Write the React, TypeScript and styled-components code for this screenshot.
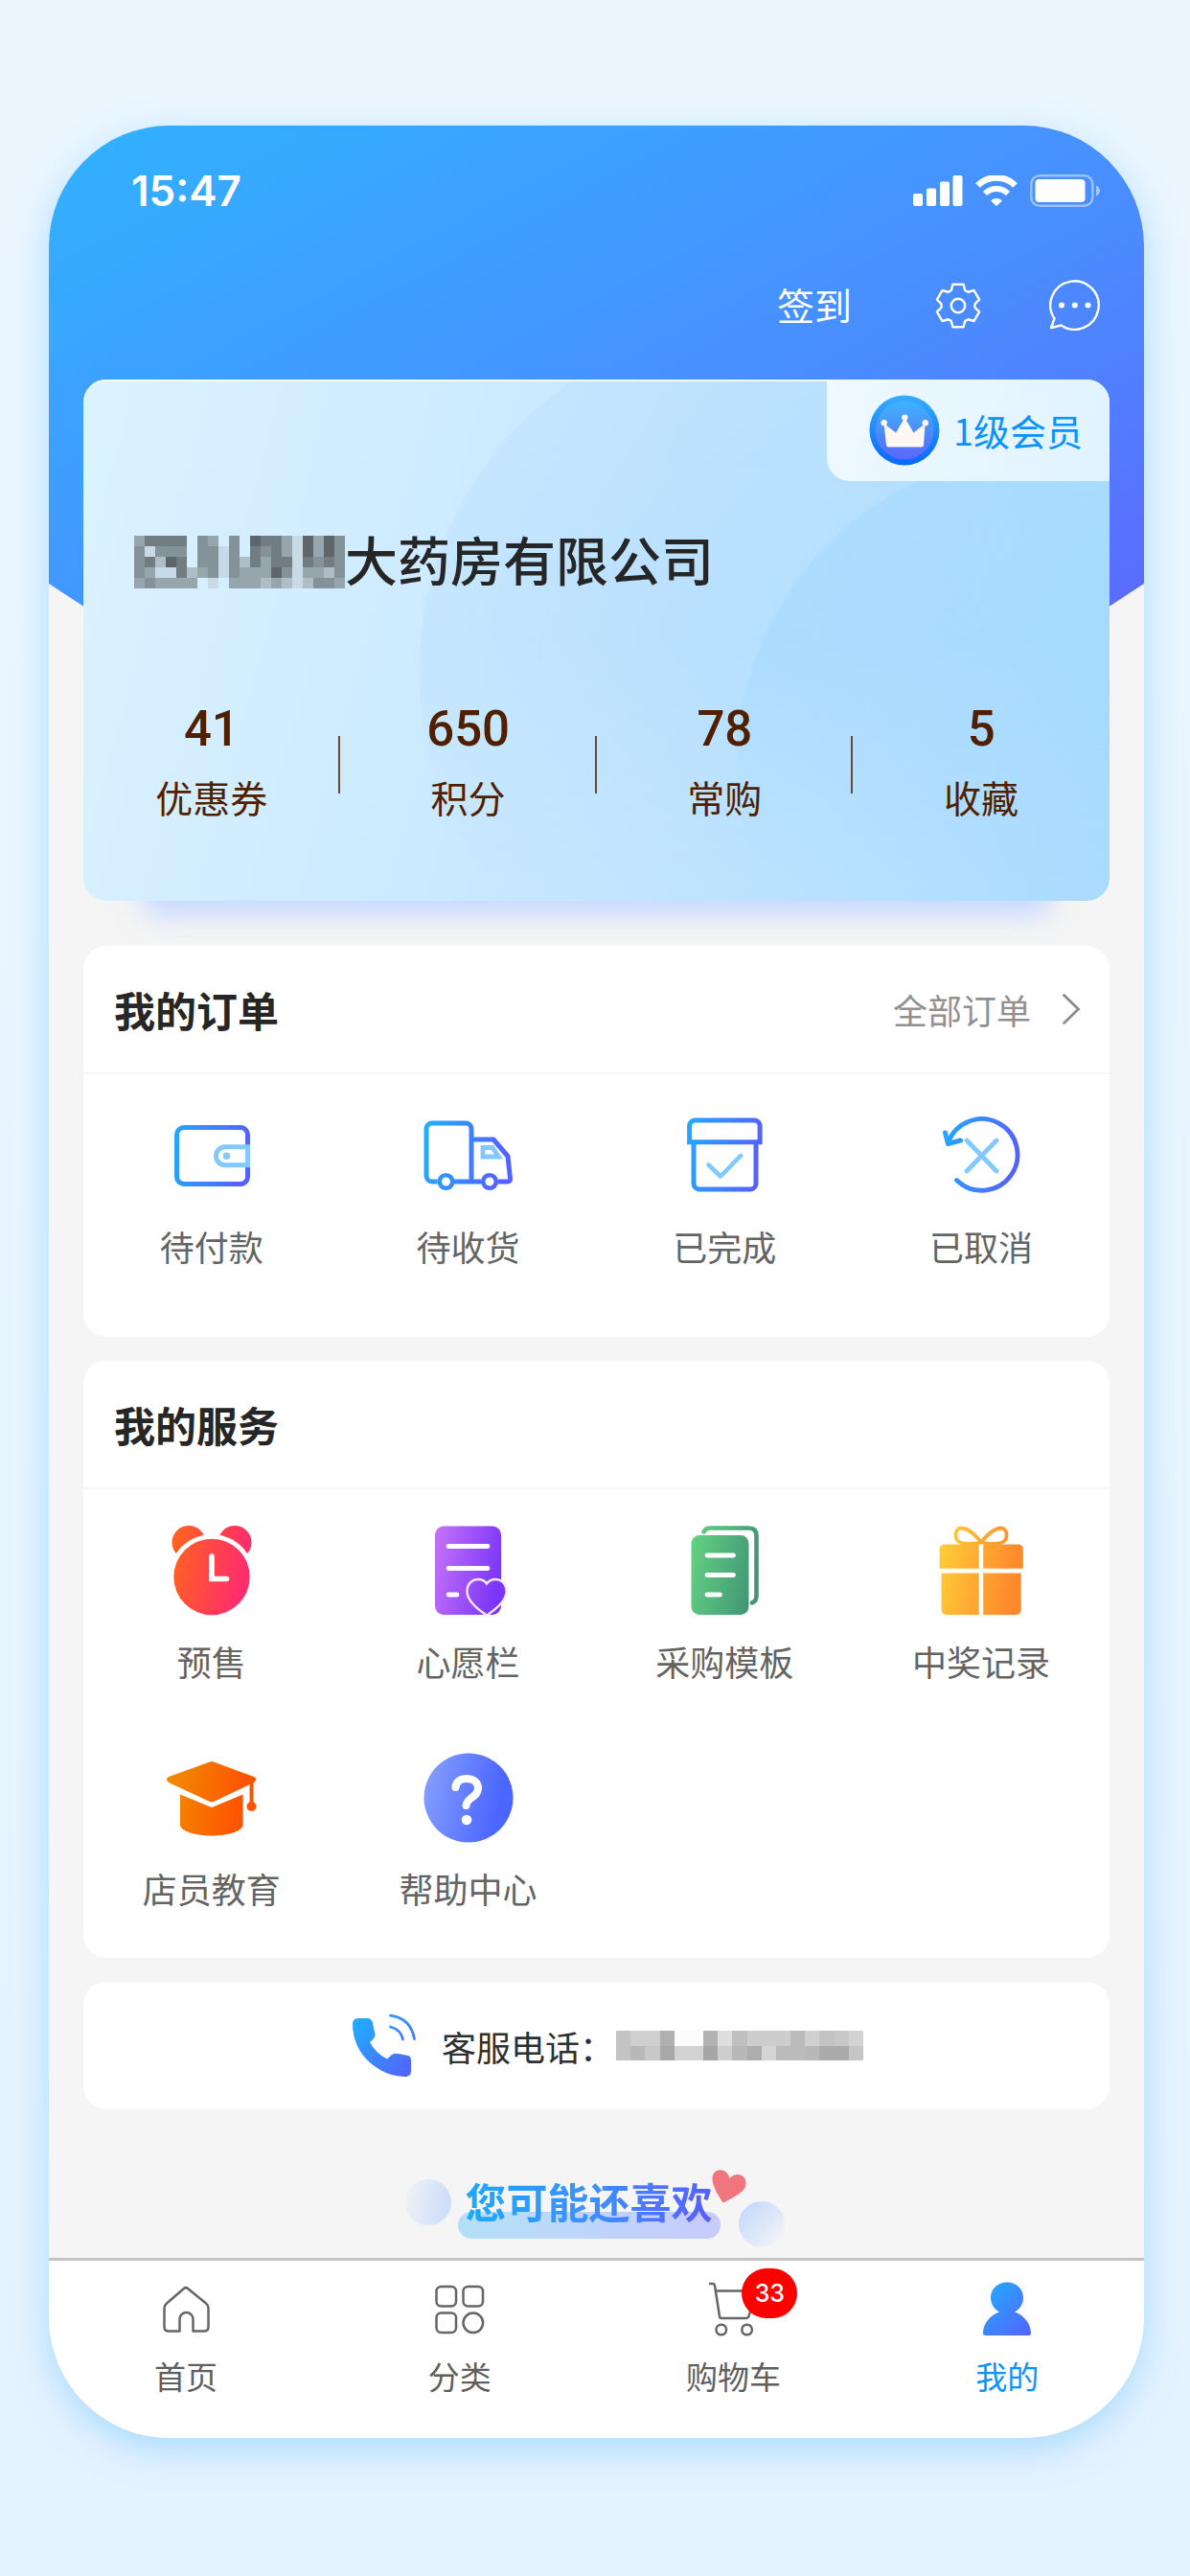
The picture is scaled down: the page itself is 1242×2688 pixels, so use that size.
import React, { useId } from "react";
import styled, { createGlobalStyle } from "styled-components";

const GlobalStyle = createGlobalStyle`
  * { box-sizing: border-box; }
  body {
    margin: 0;
    background: #e7f4ff;
    font-family: "Noto Sans CJK SC", "Noto Sans", sans-serif;
    color: #262626;
    -webkit-font-smoothing: antialiased;
  }
  h1, h2, p, ul { margin: 0; padding: 0; font-weight: inherit; }
  ul { list-style: none; }
  button {
    border: 0;
    padding: 0;
    background: none;
    font: inherit;
    color: inherit;
    cursor: pointer;
  }
  a { color: inherit; text-decoration: none; }
  svg { display: block; flex: none; }
`;

const Page = styled.div`
  min-height: 100vh;
  padding: 131px 48px 144px 51px;
  background: linear-gradient(180deg, #ebf6ff 0%, #e6f4ff 70%, #e5f2ff 100%);
`;

const Phone = styled.main`
  overflow: hidden;
  border-radius: 126px;
  background: #f5f5f5;
  box-shadow: 0 12px 36px rgba(120, 200, 255, 0.55);
`;

const Hero = styled.header`
  padding-bottom: 280px;
  color: #fff;
  background: linear-gradient(152deg, #30b2ff 0%, #419aff 40%, #4b8aff 64%, #5c69ff 100%);
  clip-path: polygon(
    0 0,
    100% 0,
    100% 478px,
    calc(100% - 64px) 520px,
    64px 520px,
    0 478px
  );
`;

const StatusBar = styled.div`
  display: flex;
  align-items: center;
  justify-content: space-between;
  height: 136px;
  padding: 0 45px 0 86px;
`;

const Clock = styled.time`
  font-family: Inter, "Noto Sans", sans-serif;
  font-size: 44px;
  font-weight: 600;
  line-height: 48px;
`;

const StatusIcons = styled.div`
  display: flex;
  align-items: center;
  gap: 13px;
`;

const Actions = styled.div`
  display: flex;
  align-items: center;
  justify-content: flex-end;
  gap: 71px;
  height: 104px;
  padding-right: 45px;
`;

const SignIn = styled.button`
  margin-right: 16px;
  padding-bottom: 4px;
  font-size: 39px;
  line-height: 48px;
`;

const Content = styled.div`
  display: flex;
  flex-direction: column;
  gap: 25px;
  padding: 0 36px;
`;

const CardLayer = styled.div`
  position: relative;
  z-index: 0;
  margin: -255px 0 22px;

  &::before {
    content: "";
    position: absolute;
    z-index: -1;
    right: 60px;
    bottom: -16px;
    left: 60px;
    height: 60px;
    border-radius: 20px;
    background: #c7d8ff;
    filter: blur(14px);
  }
`;

const MemberCard = styled.section`
  position: relative;
  isolation: isolate;
  display: flex;
  flex-direction: column;
  padding-bottom: 85px;
  border-radius: 24px;
  box-shadow: inset 0 2px 0 rgba(255, 255, 255, 0.8);
  background: linear-gradient(105deg, #dcf2ff 0%, #cdebff 35%, #b9e1ff 75%, #a9dbff 100%);

  &::before {
    content: "";
    position: absolute;
    z-index: -1;
    inset: 2px 0 0;
    border-radius: inherit;
    background:
      radial-gradient(circle 330px at 1011px 402px, rgba(158, 216, 255, 0.5) 0, rgba(158, 216, 255, 0.42) 329px, transparent 330px),
      radial-gradient(circle 367px at 717px 302px, rgba(172, 216, 255, 0.4) 0, rgba(172, 216, 255, 0.22) 366px, transparent 367px);
    mask-image: linear-gradient(180deg, #000 50%, transparent 96%);
  }
`;

const Level = styled.div`
  display: flex;
  align-items: center;
  align-self: flex-end;
  gap: 14px;
  height: 106px;
  padding: 0 28px 0 44px;
  border-radius: 0 24px 0 24px;
  background: linear-gradient(100deg, #eff9ff 0%, #e0f3ff 100%);
  color: #0a93ff;
  font-size: 38px;
  line-height: 48px;
`;

const Company = styled.h1`
  display: flex;
  align-items: flex-start;
  height: 60px;
  margin: 52px 0 117px 53px;
  font-size: 55px;
  font-weight: 500;
  line-height: 56px;

  svg { align-self: flex-end; }
`;

const Stats = styled.ul`
  display: grid;
  grid-template-columns: repeat(4, 1fr);
  color: #4f1f00;
`;

const Stat = styled.li<{ $divided: boolean }>`
  display: flex;
  flex-direction: column;
  align-items: center;
  gap: 16px;
  background: ${(p) =>
    p.$divided
      ? "linear-gradient(#6a4a33, #6a4a33) right 37px / 2px 60px no-repeat"
      : "none"};
`;

const StatValue = styled.strong`
  font-family: Roboto, "Noto Sans", sans-serif;
  font-size: 51px;
  font-weight: 500;
  line-height: 60px;
`;

const StatLabel = styled.span`
  font-size: 39px;
  line-height: 48px;
`;

const Card = styled.section`
  border-radius: 24px;
  background: #fff;
`;

const CardHeader = styled.div`
  display: flex;
  align-items: center;
  justify-content: space-between;
  height: 134px;
  padding: 0 30px 0 32px;
  border-bottom: 2px solid #f6f6f6;
`;

const CardTitle = styled.h2`
  font-size: 43px;
  font-weight: 700;
  line-height: 56px;
`;

const AllOrders = styled.a`
  display: flex;
  align-items: center;
  gap: 32px;
  color: #919191;
  font-size: 36px;
  line-height: 48px;
`;

const IconGrid = styled.ul<{ $bottom: number }>`
  display: grid;
  grid-template-columns: repeat(4, 1fr);
  row-gap: 71px;
  padding: 37px 0 ${(p) => p.$bottom}px;
`;

const GridItem = styled.li`
  display: flex;
  justify-content: center;
`;

const GridButton = styled.button`
  display: flex;
  flex-direction: column;
  align-items: center;
  gap: 22px;
  color: #646464;
  font-size: 36px;
  line-height: 48px;
`;

const ServicePhone = styled(Card)`
  display: flex;
  align-items: center;
  justify-content: center;
  gap: 26px;
  height: 133px;
  padding-left: 24px;
  color: #303030;
  font-size: 36px;
  line-height: 48px;
`;

const PhoneLine = styled.p`
  display: flex;
  align-items: center;
  gap: 2px;
`;

const Recommend = styled.div`
  display: flex;
  align-items: flex-start;
  justify-content: center;
  padding: 67px 0 11px;
`;

const Bubble = styled.span<{ $side: "left" | "right" }>`
  width: 48px;
  height: 48px;
  border-radius: 50%;
  margin: ${(p) => (p.$side === "left" ? "6px 7px 0 0" : "29px 4px 0 19px")};
  background: ${(p) =>
    p.$side === "left"
      ? "linear-gradient(100deg, rgba(205, 220, 248, 0.1) 0%, #c9dafb 100%)"
      : "linear-gradient(135deg, #c4d9fb 10%, rgba(220, 232, 250, 0.1) 90%)"};
`;

const RecommendLabel = styled.div`
  position: relative;
  padding: 0 8px 12px;
`;

const RecommendPill = styled.div`
  position: absolute;
  right: 0;
  bottom: 0;
  left: 0;
  height: 28px;
  border-radius: 14px;
  background: linear-gradient(100deg, #b4e0f8, #c8cafc);
`;

const RecommendText = styled.h2`
  position: relative;
  font-size: 43px;
  font-weight: 700;
  line-height: 56px;
  color: transparent;
  background: linear-gradient(100deg, #1ba9ff 0%, #3d90ff 50%, #5a5cff 100%);
  -webkit-background-clip: text;
  background-clip: text;
`;

const HeartMark = styled.svg`
  position: absolute;
  top: -6px;
  right: -28px;
`;

const TabBar = styled.nav`
  display: grid;
  grid-template-columns: repeat(4, 1fr);
  padding: 21px 0 43px;
  border-top: 3px solid #c4c4c4;
  background: #fff;
`;

const Tab = styled.a<{ $active?: boolean }>`
  display: flex;
  flex-direction: column;
  align-items: center;
  gap: 17px;
  color: ${(p) => (p.$active ? "#0a93ff" : "#5f5f5f")};
  font-size: 33px;
  line-height: 44px;
`;

const TabIcon = styled.span`
  position: relative;
`;

const Badge = styled.span`
  position: absolute;
  top: -13px;
  left: 39px;
  min-width: 58px;
  height: 52px;
  border-radius: 26px;
  background: #ff0000;
  color: #fff;
  font-family: Inter, "Noto Sans", sans-serif;
  font-size: 25px;
  font-weight: 500;
  line-height: 52px;
  text-align: center;
`;

type Stops = [string, string];

function Gradient({ id, stops, diagonal, size = 96 }: { id: string; stops: Stops; diagonal?: boolean; size?: number }) {
  return (
    <defs>
      <linearGradient id={id} gradientUnits="userSpaceOnUse" x1="0" y1="0" x2={size} y2={diagonal ? size : size / 5}>
        <stop offset="0.08" stopColor={stops[0]} />
        <stop offset="0.92" stopColor={stops[1]} />
      </linearGradient>
    </defs>
  );
}

const BLUE: Stops = ["#20adff", "#5463ff"];
const LIGHT_BLUE = "#82c9ff";

function Icon({ stops, children }: { stops: Stops; children: (paint: string) => React.ReactNode }) {
  const id = useId();
  return (
    <svg width="96" height="96" viewBox="0 0 96 96" fill="none" aria-hidden="true">
      <Gradient id={id} stops={stops} />
      {children(`url(#${id})`)}
    </svg>
  );
}

const WalletIcon = () => (
  <Icon stops={BLUE}>
    {(paint) => (
      <>
        <path d="M85.5 38V26a7.5 7.5 0 0 0-7.5-7.5H19a7.5 7.5 0 0 0-7.5 7.5v44a7.5 7.5 0 0 0 7.5 7.5h59a7.5 7.5 0 0 0 7.5-7.5V60" stroke={paint} strokeWidth="5" />
        <path d="M85.5 38.8H62a9.5 9.5 0 0 0 0 19h23.5Z" stroke={LIGHT_BLUE} strokeWidth="5" />
        <circle cx="63.4" cy="48.2" r="3.7" fill={LIGHT_BLUE} />
      </>
    )}
  </Icon>
);

const TruckIcon = () => (
  <Icon stops={BLUE}>
    {(paint) => (
      <>
        <path
          d="M15.5 75H10a6 6 0 0 1-6-6V20a6 6 0 0 1 6-6h35a6 6 0 0 1 6 6v55M33 75h28.5M51 31h23l15 17.500L91.500 72q.3 3-3 3H79"
          stroke={paint}
          strokeWidth="5"
          strokeLinejoin="round"
        />
        <circle cx="24.5" cy="75" r="6.8" stroke={paint} strokeWidth="4.6" fill="#fff" />
        <circle cx="70" cy="75" r="6.8" stroke={paint} strokeWidth="4.6" fill="#fff" />
        <path d="M63 39.500h10l6.500 9.500H63Z" stroke={LIGHT_BLUE} strokeWidth="4.8" />
      </>
    )}
  </Icon>
);

const DoneIcon = () => (
  <Icon stops={BLUE}>
    {(paint) => (
      <>
        <path d="M11.600 33.800V17a6 6 0 0 1 6-6h61.500a6 6 0 0 1 6 6v16.800ZM16 34v43a6 6 0 0 0 6 6h53a6 6 0 0 0 6-6V34" stroke={paint} strokeWidth="5" />
        <path d="m31.500 57.500 12.500 12 21-21.500" stroke={LIGHT_BLUE} strokeWidth="4.6" strokeLinecap="round" strokeLinejoin="round" />
      </>
    )}
  </Icon>
);

const CancelIcon = () => (
  <Icon stops={BLUE}>
    {(paint) => (
      <>
        <path d="M22.500 73.500A37.300 37.300 0 1 0 13.500 34.500" stroke={paint} strokeWidth="4.8" strokeLinecap="round" />
        <path d="m10.500 24 3 11.500L26.500 32" stroke={paint} strokeWidth="5" strokeLinecap="round" strokeLinejoin="round" />
        <path d="m33 32 31 32M64 32 33 64" stroke={LIGHT_BLUE} strokeWidth="4.8" strokeLinecap="round" />
      </>
    )}
  </Icon>
);

const AlarmIcon = () => (
  <Icon stops={["#ff641e", "#ff2d6c"]}>
    {(paint) => (
      <>
        <circle cx="24" cy="18.500" r="17.500" fill={paint} />
        <circle cx="72" cy="18.500" r="17.500" fill={paint} />
        <circle cx="48" cy="54.500" r="44.500" fill="#fff" />
        <circle cx="48" cy="54.500" r="39.700" fill={paint} />
        <path d="M48 33v23.500h15.500" stroke="#fff" strokeWidth="5.600" strokeLinecap="round" />
      </>
    )}
  </Icon>
);

const WishIcon = () => (
  <Icon stops={["#cc77f8", "#7a36f8"]}>
    {(paint) => (
      <>
        <rect x="13" y="1.500" width="69" height="92.500" rx="9" fill={paint} />
        <path d="M27 22.500h41M27 45.500h41M27 73h9" stroke="#fff" strokeWidth="4.800" strokeLinecap="round" />
        <path
          d="M67 94.500C57 88 46.500 79 46.500 69.500c0-7.500 5-12.500 11.500-12.500 3.800 0 7 1.700 9 4.500 2-2.800 5.200-4.500 9-4.500 6.500 0 11.500 5 11.500 12.500C87.500 79 77 88 67 94.500Z"
          fill={paint}
          stroke="#f3e6ff"
          strokeWidth="2.400"
        />
      </>
    )}
  </Icon>
);

const TemplateIcon = () => (
  <Icon stops={["#67d884", "#419675"]}>
    {(paint) => (
      <>
        <path d="M26.500 7.500Q28.500 3.500 33 3.500h40.500q8 0 8 8V74q0 6-4.500 7.500" stroke={paint} strokeWidth="4.600" strokeLinecap="round" />
        <rect x="13.500" y="11" width="60" height="83" rx="8.500" fill={paint} />
        <path d="M30 32h27.500M30 52.500h27.500M30 73h13.500" stroke="#fff" strokeWidth="4.800" strokeLinecap="round" />
      </>
    )}
  </Icon>
);

const GiftIcon = () => (
  <Icon stops={["#ffcf38", "#ff8a2c"]}>
    {(paint) => (
      <>
        <path d="M48 18.500C41 9.500 33 3.500 27 3.500c-6.500 0-8.500 13 .5 15.500 6 1.500 13 1 20.500-.5 7.500 1.500 14.500 2 20.500.5 9-2.500 7-15.500.5-15.500-6 0-14 6-21 15Z" stroke={paint} strokeWidth="3.800" strokeLinejoin="round" />
        <path d="M10 20.500h35.700v25.200H4.600V26q0-5.500 5.400-5.500ZM50.200 20.500h36q5.600 0 5.600 5.500v19.700H50.200ZM6.500 50.500h39.200V94H12.500q-6 0-6-6ZM50.200 50.500h39.500V88q0 6-6 6H50.200Z" fill={paint} />
      </>
    )}
  </Icon>
);

const EducationIcon = () => (
  <Icon stops={["#f08c00", "#ff5200"]}>
    {(paint) => (
      <>
        <path d="M46 10.500q2-.8 4 0L92 26q4.500 2.500 0 6L50 52q-2 .8-4 0L3 32q-4-3.500 0-6Z" fill={paint} />
        <path d="M15 44.500 48 58l32.500-13.500V76C80.500 83 64 87.500 48 87.500S15 83 15 76Z" fill={paint} />
        <path d="M89.500 32v24" stroke={paint} strokeWidth="4" />
        <circle cx="89.500" cy="57" r="5" fill={paint} />
      </>
    )}
  </Icon>
);

const HelpIcon = () => (
  <Icon stops={["#849dff", "#4a66ff"]}>
    {(paint) => (
      <>
        <circle cx="48" cy="48" r="46.500" fill={paint} />
        <path d="M34.500 37C35 31 39.500 28 46 28c6.800 0 12 3.800 12 10C58 47.500 45.500 48 45.500 56" stroke="#fff" strokeWidth="8" strokeLinecap="round" />
        <circle cx="46" cy="71" r="5.300" fill="#fff" />
      </>
    )}
  </Icon>
);

const gearPath = (() => {
  const points: string[] = [];
  const at = (deg: number, r: number) => {
    const a = (deg * Math.PI) / 180;
    points.push(`${(24 + r * Math.sin(a)).toFixed(2)} ${(24 - r * Math.cos(a)).toFixed(2)}`);
  };
  for (let i = 0; i < 6; i++) {
    const mid = i * 60;
    at(mid - 24, 17.6);
    at(mid - 14, 23);
    at(mid + 14, 23);
    at(mid + 24, 17.6);
  }
  return `M${points.join("L")}Z`;
})();

const GearIcon = () => (
  <svg width="48" height="48" viewBox="0 0 48 48" fill="none" stroke="#fff" strokeWidth="2.4" strokeLinejoin="round" aria-hidden="true">
    <path d={gearPath} />
    <circle cx="24" cy="24" r="7.200" />
  </svg>
);

const ChatIcon = () => (
  <svg width="54" height="54" viewBox="0 0 54 54" fill="none" aria-hidden="true">
    <path d="M5.500 40.500A25.200 25.200 0 1 1 12.500 47.500L2 50Z" stroke="#fff" strokeWidth="2.400" strokeLinejoin="round" />
    <circle cx="13" cy="26.500" r="3" fill="#fff" />
    <circle cx="26.800" cy="26.500" r="3" fill="#fff" />
    <circle cx="40.500" cy="26.500" r="3" fill="#fff" />
  </svg>
);

const SignalIcon = () => (
  <svg width="52" height="32" viewBox="0 0 52 32" fill="#fff" aria-hidden="true">
    <rect x="0" y="19" width="10" height="13" rx="2" />
    <rect x="14" y="13.500" width="10" height="18.500" rx="2" />
    <rect x="28" y="6.500" width="10" height="25.500" rx="2" />
    <rect x="41.500" y="0" width="10" height="32" rx="2" />
  </svg>
);

const WifiIcon = () => (
  <svg width="44" height="32" viewBox="0 0 44 32" fill="none" stroke="#fff" aria-hidden="true">
    <path d="M2.500 10.500A27.500 27.500 0 0 1 41.500 10.500" strokeWidth="6.500" />
    <path d="M10 19a17 17 0 0 1 24 0" strokeWidth="6" />
    <path d="M16 26.500a8.500 8.500 0 0 1 12 0L22 32Z" fill="#fff" stroke="none" />
  </svg>
);

const BatteryIcon = () => (
  <svg width="74" height="34" viewBox="0 0 74 34" fill="none" aria-hidden="true">
    <rect x="1.300" y="1.300" width="64" height="31.400" rx="8.500" stroke="#fff" strokeOpacity="0.45" strokeWidth="2.400" />
    <rect x="5.500" y="5" width="52" height="24" rx="4" fill="#fff" />
    <path d="M69 11.500c2.500 1 4 3 4 5.500s-1.500 4.500-4 5.500Z" fill="#fff" fillOpacity="0.5" />
  </svg>
);

const CrownIcon = () => (
  <svg width="74" height="74" viewBox="0 0 74 74" aria-hidden="true">
    <defs>
      <linearGradient id="crown-ring" x1="0" y1="0" x2="0" y2="1">
        <stop offset="0" stopColor="#35adff" />
        <stop offset="1" stopColor="#0568ff" />
      </linearGradient>
      <linearGradient id="crown-disc" x1="0" y1="0" x2="0" y2="1">
        <stop offset="0" stopColor="#3fb4ff" />
        <stop offset="1" stopColor="#5a66fb" />
      </linearGradient>
    </defs>
    <circle cx="37" cy="37" r="36.500" fill="url(#crown-ring)" />
    <circle cx="37" cy="37" r="30.500" fill="url(#crown-disc)" />
    <g fill="#fff8f2">
      <path d="m15.500 30 12.500 9.500L37.300 24l9.200 15.500L58.500 30 57 52.500q-.2 2-2.200 2H20.200q-2 0-2.200-2Z" />
      <circle cx="15.700" cy="29.300" r="3.200" />
      <circle cx="37.300" cy="23.600" r="3.200" />
      <circle cx="58.700" cy="29.300" r="3.200" />
    </g>
  </svg>
);

const CallIcon = () => {
  const id = useId();
  return (
    <svg width="67" height="67" viewBox="0 0 67 67" fill="none" aria-hidden="true">
      <Gradient id={id} stops={BLUE} diagonal size={66} />
      <path
        d="M0 11Q0 5 6 5h9q5 0 6 5l2.500 12q.5 3-5.500 8Q24 41.500 36 47.500l5-4.500q3-2 6-1l10 1.800q4 .7 4 4.700V60q0 6-7 6C28 65 0 44 0 11Z"
        fill={`url(#${id})`}
      />
      <path d="M39.500 14Q50.500 17 52.500 27M39.500 2.200Q60.500 5 64.500 26.500" stroke={`url(#${id})`} strokeWidth="2.800" strokeLinecap="round" />
    </svg>
  );
};

const ChevronIcon = () => (
  <svg width="20" height="34" viewBox="0 0 20 34" fill="none" stroke="#8c8c8c" strokeWidth="2.800" strokeLinecap="round" aria-hidden="true">
    <path d="m2.500 2.500 15 14.500-15 14.500" />
  </svg>
);

const tabSvg = { width: 60, height: 60, viewBox: "0 0 60 60", fill: "none", stroke: "#666", strokeWidth: 2.5, "aria-hidden": true } as const;

const HomeIcon = () => (
  <svg {...tabSvg} strokeLinejoin="round">
    <path d="M28 8q2-1.700 4 0l19 15.500q2.500 2 2.500 5V48q0 4.500-4.500 4.500H37.500V40a7 7 0 0 0-14 0v12.500H12q-4.500 0-4.500-4.500V28.500q0-3 2.500-5Z" />
  </svg>
);

const CategoryIcon = () => (
  <svg {...tabSvg}>
    <rect x="5.500" y="6" width="20.500" height="20.500" rx="5" />
    <rect x="33.500" y="6" width="20.500" height="20.500" rx="5" />
    <rect x="5.500" y="33.500" width="20.500" height="20.500" rx="5" />
    <circle cx="43.800" cy="43.800" r="10.300" />
  </svg>
);

const CartIcon = () => (
  <svg {...tabSvg} strokeLinejoin="round">
    <path d="M5 3h4q1.500 0 2 2l5 32q.3 2 2 2h25.500q2.500 0 3.200-2.500L54 10.500H12" />
    <circle cx="17.800" cy="51" r="5.300" />
    <circle cx="44.600" cy="51" r="5.300" />
  </svg>
);

const UserIcon = () => {
  const id = useId();
  return (
    <svg width="60" height="60" viewBox="0 0 60 60" aria-hidden="true">
      <Gradient id={id} stops={BLUE} diagonal size={60} />
      <path
        d="M30 1.500c10 0 17 7 17 16 0 6.500-3.500 12-9 15C48 36 55 45 55 54.500q0 2.500-2 2.500H7.500q-2.500 0-2.500-2.500C5 45 12 36 22 32.500c-5.500-3-9-8.500-9-15 0-9 7-16 17-16Z"
        fill={`url(#${id})`}
      />
    </svg>
  );
};

/* Privacy mosaics: one character per cell, keyed to a shade. */
const SHADES: Record<string, string> = {
  "1": "#c8dae6",
  "2": "#aebdc6",
  "3": "#97a5ad",
  "4": "#84929a",
  "5": "#727d83",
  "6": "#5e666b",
};

const NAME_CELLS = [
  "35555.43.4.655316364",
  "41444.4414.545316364",
  "45265.44142535515454",
  "43115234143336413324",
  "343333.1.33323212443",
];

const NUMBER_CELLS = [
  ["c4", "cf", "cf", "b0", "fb", "fb", "b2", "de", "bf", "cd", "cd", "cd", "bb", "d0", "c3", "c8", "d3"],
  ["c3", "b8", "c8", "a8", "d3", "d3", "a6", "ce", "b8", "ad", "d5", "bb", "bb", "b8", "ab", "ab", "c6"],
];

const NameMosaic = () => (
  <svg width="220" height="55" viewBox="0 0 20 5" preserveAspectRatio="none" shapeRendering="crispEdges" aria-hidden="true">
    {NAME_CELLS.map((row, y) =>
      [...row].map((cell, x) => (SHADES[cell] ? <rect key={`${x}-${y}`} x={x} y={y} width="1" height="1" fill={SHADES[cell]} /> : null))
    )}
  </svg>
);

const NumberMosaic = () => (
  <svg width="258" height="31" viewBox="0 0 17 2" preserveAspectRatio="none" shapeRendering="crispEdges" aria-hidden="true">
    {NUMBER_CELLS.map((row, y) => row.map((c, x) => <rect key={`${x}-${y}`} x={x} y={y} width="1" height="1" fill={`#${c}${c}${c}`} />))}
  </svg>
);

const stats = [
  { value: "41", label: "优惠券" },
  { value: "650", label: "积分" },
  { value: "78", label: "常购" },
  { value: "5", label: "收藏" },
];

const orders = [
  { label: "待付款", Glyph: WalletIcon },
  { label: "待收货", Glyph: TruckIcon },
  { label: "已完成", Glyph: DoneIcon },
  { label: "已取消", Glyph: CancelIcon },
];

const services = [
  { label: "预售", Glyph: AlarmIcon },
  { label: "心愿栏", Glyph: WishIcon },
  { label: "采购模板", Glyph: TemplateIcon },
  { label: "中奖记录", Glyph: GiftIcon },
  { label: "店员教育", Glyph: EducationIcon },
  { label: "帮助中心", Glyph: HelpIcon },
];

const tabs = [
  { label: "首页", Glyph: HomeIcon },
  { label: "分类", Glyph: CategoryIcon },
  { label: "购物车", Glyph: CartIcon, badge: 33 },
  { label: "我的", Glyph: UserIcon, active: true },
];

function Shortcuts({ items, bottom }: { items: typeof orders; bottom: number }) {
  return (
    <IconGrid $bottom={bottom}>
      {items.map(({ label, Glyph }) => (
        <GridItem key={label}>
          <GridButton type="button">
            <Glyph />
            {label}
          </GridButton>
        </GridItem>
      ))}
    </IconGrid>
  );
}

export default function App() {
  return (
    <>
      <GlobalStyle />
      <Page>
        <Phone>
          <Hero>
            <StatusBar>
              <Clock>15:47</Clock>
              <StatusIcons>
                <SignalIcon />
                <WifiIcon />
                <BatteryIcon />
              </StatusIcons>
            </StatusBar>
            <Actions>
              <SignIn type="button">签到</SignIn>
              <button type="button" aria-label="设置">
                <GearIcon />
              </button>
              <button type="button" aria-label="消息">
                <ChatIcon />
              </button>
            </Actions>
          </Hero>

          <Content>
            <CardLayer>
              <MemberCard>
                <Level>
                  <CrownIcon />
                  1级会员
                </Level>
                <Company>
                  <NameMosaic />
                  大药房有限公司
                </Company>
                <Stats>
                  {stats.map((s, i) => (
                    <Stat key={s.label} $divided={i < stats.length - 1}>
                      <StatValue>{s.value}</StatValue>
                      <StatLabel>{s.label}</StatLabel>
                    </Stat>
                  ))}
                </Stats>
              </MemberCard>
            </CardLayer>

            <Card>
              <CardHeader>
                <CardTitle>我的订单</CardTitle>
                <AllOrders href="#orders">
                  全部订单
                  <ChevronIcon />
                </AllOrders>
              </CardHeader>
              <Shortcuts items={orders} bottom={71} />
            </Card>

            <Card>
              <CardHeader>
                <CardTitle>我的服务</CardTitle>
              </CardHeader>
              <Shortcuts items={services} bottom={49} />
            </Card>

            <ServicePhone>
              <CallIcon />
              <PhoneLine>
                客服电话：
                <NumberMosaic />
              </PhoneLine>
            </ServicePhone>
          </Content>

          <Recommend>
            <Bubble $side="left" />
            <RecommendLabel>
              <RecommendPill />
              <RecommendText>您可能还喜欢</RecommendText>
              <HeartMark width="38" height="38" viewBox="0 0 38 38" aria-hidden="true">
                <path d="M12.500 36.500C7 28 1 18 1.500 10.500 2.500 0 16-1 19.500 11 28 2.500 39 9 36 19.500 34 26 22 32 12.500 36.500Z" fill="#f0757f" />
              </HeartMark>
            </RecommendLabel>
            <Bubble $side="right" />
          </Recommend>

          <TabBar>
            {tabs.map(({ label, Glyph, badge, active }) => (
              <Tab key={label} href="#" $active={active}>
                <TabIcon>
                  <Glyph />
                  {badge ? <Badge>{badge}</Badge> : null}
                </TabIcon>
                {label}
              </Tab>
            ))}
          </TabBar>
        </Phone>
      </Page>
    </>
  );
}
